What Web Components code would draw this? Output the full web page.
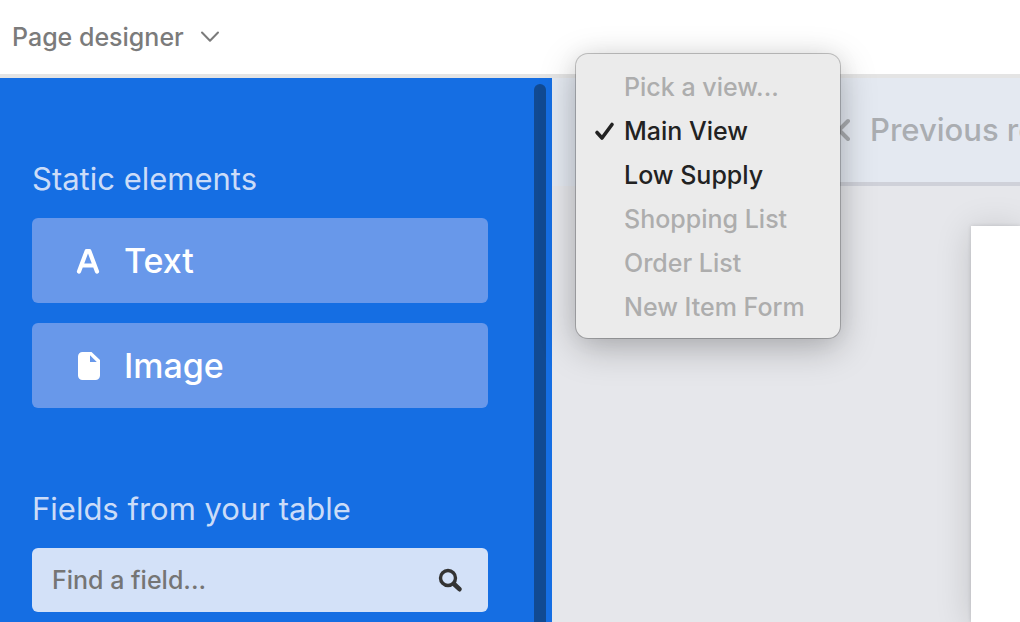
<!DOCTYPE html>
<html lang="en">
<head>
<meta charset="utf-8">
<title>Page designer</title>
<style>
  body { margin: 0; font-family: Inter, "Liberation Sans", sans-serif; background: #e6e7eb; }
</style>
</head>
<body>
<designer-app></designer-app>

<script>
const define = (name, html, setup) => {
  const template = document.createElement("template");
  template.innerHTML = html;
  customElements.define(name, class extends HTMLElement {
    constructor() {
      super();
      this.attachShadow({ mode: "open" }).append(template.content.cloneNode(true));
    }
    connectedCallback() { if (setup) setup(this, this.shadowRoot); }
  });
};

define("app-header", `
  <style>
    :host { display: flex; align-items: center; height: 74px; padding-left: 12px; background: #fff; border-bottom: 4px solid #e4e4e4; }
    button { display: flex; align-items: center; gap: 16px; border: 0; padding: 0; background: none; color: #7b7b7b; font: inherit; font-size: 25px; font-weight: 450; line-height: 32px; }
    svg { display: block; }
  </style>
  <button type="button" aria-haspopup="true"><slot></slot>
    <svg width="20" height="12" viewBox="0 0 20 12" fill="none" stroke="currentColor" stroke-width="2" stroke-linecap="round" stroke-linejoin="round" aria-hidden="true"><path d="M2 1.5 10 9.8 18 1.5"/></svg>
  </button>
`);

define("panel-section", `
  <style>
    :host { display: flex; flex-direction: column; gap: 20px; }
    h2 { margin: 0; font-size: 31px; line-height: 38px; font-weight: 400; color: #cbdcf8; }
  </style>
  <h2></h2>
  <slot></slot>
`, (host, root) => { root.querySelector("h2").textContent = host.getAttribute("heading"); });

define("element-button", `
  <style>
    :host { display: block; }
    button { display: flex; align-items: center; gap: 24px; width: 100%; height: 85px; padding: 0 44px; border: 0; border-radius: 6px; background: #6898ea; color: #fff; font: inherit; font-size: 34px; font-weight: 450; }
    ::slotted(svg) { display: block; width: 24px; height: 28px; }
  </style>
  <button type="button"><slot name="icon"></slot><slot></slot></button>
`);

define("field-search", `
  <style>
    :host { display: block; }
    label { display: flex; align-items: center; height: 64px; padding: 0 24px 0 20px; border-radius: 6px; background: #d3e1f8; }
    input { flex: 1; min-width: 0; padding: 0; border: 0; outline: 0; background: none; font: inherit; font-size: 25px; font-weight: 450; line-height: 32px; }
    input::placeholder { color: #757575; opacity: 1; }
    svg { display: block; }
  </style>
  <label>
    <input type="text" placeholder="Find a field..." aria-label="Find a field">
    <svg width="28" height="28" viewBox="0 0 28 28" fill="none" stroke="#333" aria-hidden="true"><circle cx="12" cy="12" r="7.5" stroke-width="3.4"/><path d="m18 18 5.500 5.200" stroke-width="4.600" stroke-linecap="round"/></svg>
  </label>
`);

define("elements-panel", `
  <style>
    :host { display: flex; justify-content: space-between; box-sizing: border-box; flex: 0 0 552px; min-height: 0; padding: 6px 6px 0 32px; background: #156ee3; }
    .content { display: flex; flex-direction: column; gap: 82px; width: 456px; padding-top: 76px; }
    .thumb { width: 12px; border-radius: 6px 6px 0 0; background: #114a92; }
  </style>
  <div class="content"><slot></slot></div>
  <div class="thumb"></div>
`);

define("record-bar", `
  <style>
    :host { display: flex; height: 108px; padding-left: 48px; background: #e4e9f1; overflow: hidden; }
    nav { display: flex; align-items: center; flex: 1; min-width: 0; padding-left: 236px; border-bottom: 4px solid #cfd1d9; }
    button { display: flex; align-items: center; gap: 20px; border: 0; padding: 0; background: none; color: #aaadb1; font: inherit; font-size: 31px; line-height: 40px; font-weight: 550; white-space: nowrap; }
    svg { display: block; }
  </style>
  <nav aria-label="Records">
    <button type="button" disabled>
      <svg width="14" height="24" viewBox="0 0 14 24" fill="none" stroke="currentColor" stroke-width="4" stroke-linecap="round" stroke-linejoin="round" aria-hidden="true"><path d="M12 3 3 12l9 9"/></svg>
      <slot></slot>
    </button>
  </nav>
`);

define("page-canvas", `
  <style>
    :host { display: flex; flex: 1; padding: 40px 0 0 419px; overflow: hidden; }
    .sheet { flex: 1; background: #fff; box-shadow: 0 4px 36px rgba(0,0,0,.16), 0 0 4px rgba(0,0,0,.14); }
  </style>
  <div class="sheet"></div>
`);

define("view-option", `
  <style>
    :host { display: block; }
    button { display: flex; align-items: center; gap: 8px; width: 100%; height: 44px; padding: 0 18px; border: 0; background: none; color: #222; font: inherit; font-size: 25px; font-weight: 450; white-space: nowrap; }
    button:disabled { color: #adadad; }
    svg { display: block; visibility: hidden; }
    :host([checked]) svg { visibility: visible; }
  </style>
  <button type="button" role="menuitemradio">
    <svg width="22" height="22" viewBox="0 0 22 22" fill="none" stroke="currentColor" stroke-width="3.600" stroke-linecap="round" stroke-linejoin="round" aria-hidden="true"><path d="m3 12.500 5 5.500L18 4.500"/></svg>
    <slot></slot>
  </button>
`, (host, root) => {
  const button = root.querySelector("button");
  button.disabled = host.hasAttribute("disabled");
  button.setAttribute("aria-checked", host.hasAttribute("checked"));
});

define("view-menu", `
  <style>
    :host { display: block; box-sizing: border-box; width: 264px; padding: 11px 0 9px; border-radius: 12px; background: #ebebeb; box-shadow: 0 0 0 1px rgba(0,0,0,.22), 0 10px 36px rgba(0,0,0,.25), 0 0 24px rgba(0,0,0,.06); }
  </style>
  <div role="menu" aria-label="Pick a view"><slot></slot></div>
`);

define("designer-app", `
  <style>
    :host { display: flex; flex-direction: column; height: 100vh; overflow: hidden; }
    .body { display: flex; flex: 1; min-height: 0; }
    main { position: relative; display: flex; flex: 1; flex-direction: column; min-width: 0; }
    view-menu { position: absolute; top: -24px; left: 24px; }
  </style>
  <app-header>Page designer</app-header>
  <div class="body">
    <elements-panel>
      <panel-section heading="Static elements">
        <element-button>
          <svg slot="icon" viewBox="0 0 24 28" fill="none" stroke="#fff" stroke-width="4.2" stroke-linecap="round" stroke-linejoin="round" aria-hidden="true"><path d="M3 24.5 10.6 4.2h2.8L21 24.5M6.5 18.5h11"/></svg>Text
        </element-button>
        <element-button>
          <svg slot="icon" viewBox="0 0 24 28" fill="#fff" aria-hidden="true"><path fill-rule="evenodd" d="M6.500 0h9L24 8v15.500a4.500 4.500 0 0 1-4.500 4.500H6.500a4.500 4.500 0 0 1-4.500-4.500v-19A4.500 4.500 0 0 1 6.500 0Zm7.500 3.200V10h6.800Z"/></svg>Image
        </element-button>
      </panel-section>
      <panel-section heading="Fields from your table">
        <field-search></field-search>
      </panel-section>
    </elements-panel>
    <main>
      <record-bar>Previous record</record-bar>
      <page-canvas></page-canvas>
      <view-menu>
        <view-option disabled>Pick a view...</view-option>
        <view-option checked>Main View</view-option>
        <view-option>Low Supply</view-option>
        <view-option disabled>Shopping List</view-option>
        <view-option disabled>Order List</view-option>
        <view-option disabled>New Item Form</view-option>
      </view-menu>
    </main>
  </div>
</designer-app>
`);
</script>
</body>
</html>
